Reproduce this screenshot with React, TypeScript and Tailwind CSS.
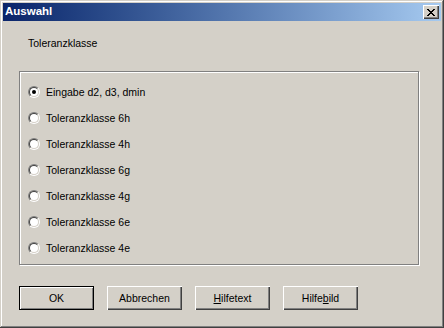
import React from 'react';

const options = [
  'Eingabe d2, d3, dmin',
  'Toleranzklasse 6h',
  'Toleranzklasse 4h',
  'Toleranzklasse 6g',
  'Toleranzklasse 4g',
  'Toleranzklasse 6e',
  'Toleranzklasse 4e',
];

function Radio({ checked }: { checked: boolean }) {
  return (
    <div className="w-3 h-3 rounded-full border border-t-[#808080] border-l-[#808080] border-r-white border-b-white">
      <div className="w-full h-full rounded-full border border-t-[#404040] border-l-[#404040] border-r-[#d4d0c8] border-b-[#d4d0c8] bg-white flex items-center justify-center">
        {checked && <div className="w-1 h-1 rounded-full bg-black" />}
      </div>
    </div>
  );
}

function Button({ children, primary }: { children: React.ReactNode; primary?: boolean }) {
  if (primary) {
    return (
      <div className="w-[75px] h-[24px] border border-black">
        <div className="w-full h-full flex items-center justify-center shadow-[inset_1px_1px_0_#fff,inset_-1px_-1px_0_#808080]">
          {children}
        </div>
      </div>
    );
  }
  return (
    <div className="w-[75px] h-[24px] flex items-center justify-center shadow-[inset_1px_1px_0_#fff,inset_-1px_-1px_0_#404040,inset_-2px_-2px_0_#808080]">
      {children}
    </div>
  );
}

function CloseGlyph() {
  // pixel X like the Marlett glyph
  const rows = ['11000011', '01100110', '00111100', '00011000', '00111100', '01100110', '11000011'];
  return (
    <svg width="8" height="7" viewBox="0 0 8 7" shapeRendering="crispEdges">
      {rows.map((r, y) =>
        r.split('').map((c, x) => (c === '1' ? <rect key={`${x}-${y}`} x={x} y={y} width="1" height="1" fill="#000" /> : null))
      )}
    </svg>
  );
}

export default function App() {
  return (
    <div
      className="w-[444px] h-[328px] bg-[#d4d0c8] p-[3px] flex flex-col text-black shadow-[inset_-1px_-1px_0_#404040,inset_1px_1px_0_#d4d0c8,inset_-2px_-2px_0_#808080,inset_2px_2px_0_#fff]"
      style={{ fontFamily: '"Liberation Sans", Arial, sans-serif' }}
    >
      {/* Title bar */}
      <div className="h-[18px] bg-gradient-to-r from-[#0a246a] to-[#a6caf0] flex items-center justify-between pl-[2px] pr-[2px]">
        <span className="text-white font-bold text-[11.5px] leading-none">Auswahl</span>
        <div className="w-[16px] h-[14px] bg-[#d4d0c8] flex items-center justify-center shadow-[inset_1px_1px_0_#fff,inset_-1px_-1px_0_#404040,inset_-2px_-2px_0_#808080]">
          <CloseGlyph />
        </div>
      </div>

      {/* Body */}
      <div className="flex-1 flex flex-col text-[10.5px] leading-[12px]">
        <div className="ml-[25px] mt-[16px]">Toleranzklasse</div>

        <div className="ml-[16px] mt-[22px] w-[400px] h-[194px] border border-[#808080] shadow-[1px_1px_0_#fff,inset_1px_1px_0_#fff] pt-[7px] pl-[8px]">
          {options.map((o, i) => (
            <div key={o} className="h-[26px] flex items-center gap-[6px]">
              <Radio checked={i === 0} />
              <span>{o}</span>
            </div>
          ))}
        </div>

        <div className="ml-[16px] mt-[21px] flex gap-[13px]">
          <Button primary>OK</Button>
          <Button>Abbrechen</Button>
          <Button>
            <span>
              <u>H</u>ilfetext
            </span>
          </Button>
          <Button>
            <span>
              Hilfe<u>b</u>ild
            </span>
          </Button>
        </div>
      </div>
    </div>
  );
}
